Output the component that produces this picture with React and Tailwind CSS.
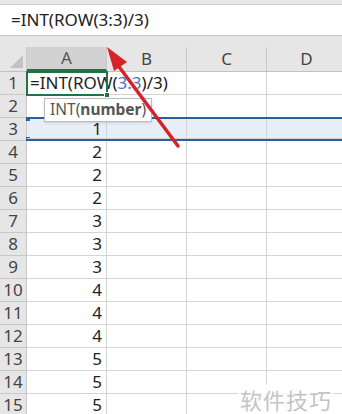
const values = [null, null, 1, 2, 2, 2, 3, 3, 3, 4, 4, 4, 5, 5, 5]
const cols = ['A', 'B', 'C', 'D']

function Row({ n, value }) {
  const sel = n === 3
  const active = n === 1
  return (
    <div className={`flex h-[23px] ${sel ? 'bg-[#e8eef8]' : 'bg-white'}`}>
      <div className="w-[27px] shrink-0 bg-[#e6e6e6] border-r border-b border-[#c8c8c8] flex items-center justify-center text-[17px] text-[#444]">
        {n}
      </div>
      <div className={`relative flex flex-1 ${sel ? 'border-y-2 border-[#2d5d9b] -mt-[1px] h-[24px]' : ''}`}>
        {sel && <div className="absolute -left-[1px] -top-[2px] w-[4px] h-[4px] bg-[#2d5d9b]" />}
        {sel && <div className="absolute -left-[1px] -bottom-[2px] w-[4px] h-[4px] bg-[#2d5d9b]" />}
        {cols.map((c, i) => (
          <div key={c} className={`relative w-[80px] shrink-0 border-r border-b border-[#d4d4d4] flex items-center pr-[4px] text-[17px] text-[#222] ${active && i === 0 ? 'outline-2 -outline-offset-1 outline-[#217346] z-10 justify-start pl-[3px] overflow-visible whitespace-nowrap text-[#111]' : 'justify-end'}`}>
            {i === 0 && value}
            {active && i === 0 && (
              <>
                =INT(ROW(<span className="text-[#4a72c4]">3:3</span>)/3)
                <span className="absolute -right-[4px] -bottom-[4px] w-[6px] h-[6px] bg-[#217346] border border-white" />
              </>
            )}
          </div>
        ))}
      </div>
    </div>
  )
}

export default function App() {
  return (
    <div className="relative w-[342px] h-[414px] overflow-hidden bg-white" style={{ fontFamily: '"Noto Sans", "Noto Sans CJK SC", sans-serif' }}>
      <div className="h-[5px] bg-[#e6e6e6] border-b border-[#d0d0d0]" />
      <div className="h-[31px] bg-white border-b border-[#c6c6c6] flex items-center pl-[11px] text-[17px] text-[#222]">
        =INT(ROW(3:3)/3)
      </div>
      <div className="h-[11px] bg-[#e6e6e6]" />
      <div className="flex h-[25px] bg-[#e6e6e6] border-b border-[#c0c0c0]">
        <div className="w-[27px] shrink-0 border-r border-[#c8c8c8] flex items-end justify-end p-[3px]">
          <div className="w-0 h-0 border-l-[13px] border-l-transparent border-b-[13px] border-b-[#c2c2c2]" />
        </div>
        {cols.map((c, i) => (
          <div key={c} className={`w-[80px] shrink-0 border-r border-[#c8c8c8] flex items-center justify-center text-[17px] ${i === 0 ? 'bg-[#d2d2d2] text-[#555] border-b-2 border-b-[#217346]' : 'text-[#444]'}`}>
            {c}
          </div>
        ))}
      </div>
      <div className="flex flex-col">
        {values.map((v, i) => (
          <Row key={i} n={i + 1} value={v} />
        ))}
      </div>

      {/* tooltip */}
      <div className="absolute left-[44px] top-[98px] z-20 h-[24px] w-[108px] px-[5px] bg-white border border-[#bcbcbc] shadow-sm flex items-center text-[15.5px] text-[#555]">
        INT(<span className="font-bold">number</span>)
      </div>

      {/* arrow */}
      <svg className="absolute left-0 top-0 z-30" width="342" height="414">
        <line x1="178" y1="146" x2="114" y2="60" stroke="#d4232b" strokeWidth="3.5" strokeLinecap="round" />
        <polygon points="107,47 127,62 114,71" fill="#d4232b" />
      </svg>

      {/* watermark */}
      <div className="absolute left-[238px] top-[384px] z-20 px-[2px] bg-white/80 text-[22px] text-[#c4c4c4] tracking-[1px]">
        软件技巧
      </div>
    </div>
  )
}
